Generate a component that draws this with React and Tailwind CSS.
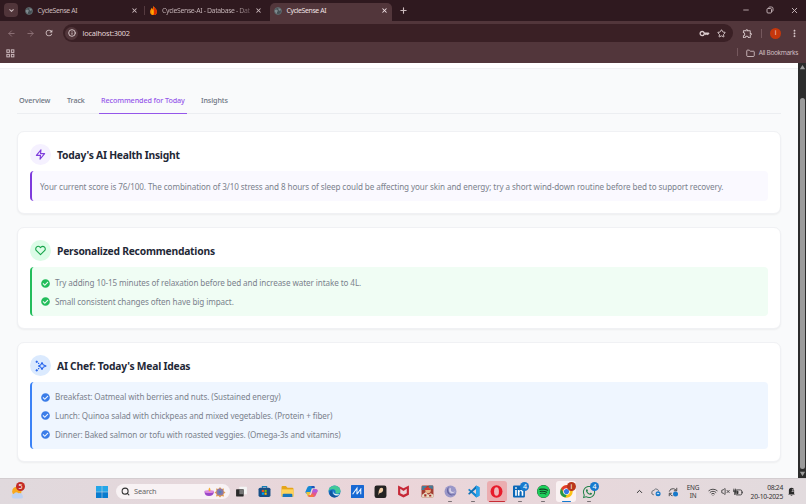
import { Search, ChevronDown, ChevronUp, ArrowLeft, ArrowRight, X, Plus, Minus, Info, Star, Folder, Wifi, VolumeX } from "lucide-react";
import { FaSpotify, FaWhatsapp, FaCheckCircle } from "react-icons/fa";
import { FiZap, FiHeart } from "react-icons/fi";
import { MdOutlineExtension, MdMoreVert, MdRefresh, MdOutlineKey } from "react-icons/md";

function Globe() {
  return (
    <svg viewBox="0 0 16 16" className="size-[8px] shrink-0">
      <circle cx="8" cy="8" r="7" fill="#444f54" stroke="#68757a" strokeWidth="1.4" />
      <path d="M2 6l4-1 2 3-2 2v4L2 10zM9 2l5 3-2 3-3-2z" fill="#7f8a8e" />
    </svg>
  );
}

function Flame() {
  return (
    <svg viewBox="0 0 16 16" className="size-[9px] shrink-0">
      <path d="M8 0c1 3 6 5 6 10a6 6 0 0 1-12 0C2 7 4 5 5 3l1 3z" fill="#ff9100" />
      <path d="M8 0c1 3 6 5 6 10a6 6 0 0 1-6 6z" fill="#dd2c00" />
      <path d="M8 6c-3 3-3 6 0 9z" fill="#ffc400" />
    </svg>
  );
}

function TabStrip() {
  return (
    <div className="flex h-[21px] bg-[#2f191f] text-[6.9px] tracking-[-0.36px] text-[#cbbabd]">
      <div className="ml-1 mt-[3px] flex size-[14px] items-center justify-center rounded-[4px] bg-[#51353a]">
        <ChevronDown className="size-[7px]" strokeWidth={3.5} />
      </div>
      <div className="ml-[7px] flex w-[119px] items-center">
        <Globe />
        <span className="ml-[4.5px] flex-1 whitespace-nowrap pt-px">CycleSense AI</span>
        <X className="mr-[6px] size-[7px]" strokeWidth={3.5} />
      </div>
      <div className="mt-[6px] h-[9px] w-px bg-[#553b40]" />
      <div className="ml-[4px] flex w-[115px] items-center">
        <Flame />
        <span className="ml-[4px] w-[90px] whitespace-nowrap bg-gradient-to-r from-[#cbbabd] from-82% to-[#59444a] bg-clip-text pt-px text-transparent">
          CycleSense-AI - Database - Dat
        </span>
        <X className="ml-[3px] size-[7px] shrink-0" strokeWidth={3.5} />
      </div>
      <div className="ml-[6px] mt-[3px] flex w-[122px] items-center rounded-t-[5px] bg-[#52363b] pb-[3px] text-[#efe2e4]">
        <div className="ml-[4px] flex">
          <Globe />
        </div>
        <span className="ml-[4.5px] flex-1 whitespace-nowrap pt-px">CycleSense AI</span>
        <X className="mr-[4px] size-[7px]" strokeWidth={3.5} />
      </div>
      <Plus className="ml-[7px] mt-[6px] size-[9px]" strokeWidth={3} />
      <div className="ml-auto flex items-start gap-[16px] pr-[7px] pt-[6px]">
        <Minus className="size-[8px]" strokeWidth={2.5} />
        <svg viewBox="0 0 16 16" className="size-[8px]" fill="none" stroke="currentColor" strokeWidth="1.8">
          <rect x="2" y="5" width="9" height="9" rx="2" />
          <path d="M5 3q1-1 3-1h3q3 0 3 3v3q0 2-1 3" />
        </svg>
        <X className="size-[9px]" strokeWidth={2.5} />
      </div>
    </div>
  );
}

function Toolbar() {
  return (
    <div className="flex h-[24px] items-center bg-[#52363b] text-[#d8c8ca]">
      <ArrowLeft className="ml-[7px] size-[9px] text-[#8d7176]" strokeWidth={2.5} />
      <ArrowRight className="ml-[10px] size-[9px] text-[#8d7176]" strokeWidth={2.5} />
      <MdRefresh className="ml-[9px] size-[10px]" />
      <div className="ml-[9px] flex h-[18px] w-[670px] items-center rounded-full bg-[#3a2025]">
        <div className="ml-[2px] flex size-[13px] items-center justify-center rounded-full bg-[#52363b]">
          <Info className="size-[8px]" strokeWidth={2.8} />
        </div>
        <span className="ml-[4.5px] flex-1 pt-px text-[7.4px] tracking-[-0.2px] text-[#e3d5d7]">localhost:3002</span>
        <MdOutlineKey className="mr-[7px] size-[11px]" />
        <Star className="mr-[7px] size-[9px]" strokeWidth={2.6} />
      </div>
      <MdOutlineExtension className="ml-[9px] size-[11px]" />
      <div className="ml-[8px] h-[9px] w-px bg-[#75585d]" />
      <div className="ml-[8px] flex size-[11px] items-center justify-center rounded-full bg-[#c5370c] text-[6.5px] text-[#ffd5c9]">i</div>
      <MdMoreVert className="ml-[8px] size-[11px]" />
    </div>
  );
}

function BookmarkBar() {
  return (
    <div className="flex h-[18px] items-center bg-[#52363b] text-[#cfbdc0]">
      <svg viewBox="0 0 16 16" className="mb-[2px] ml-[6px] size-[9px]" fill="none" stroke="currentColor" strokeWidth="1.7">
        <rect x="1.5" y="1.5" width="4.5" height="4.5" />
        <rect x="9.5" y="1.5" width="4.5" height="4.5" />
        <rect x="1.5" y="9.5" width="4.5" height="4.5" />
        <rect x="9.5" y="9.5" width="4.5" height="4.5" />
      </svg>
      <div className="mb-[4px] ml-auto h-[8px] w-px bg-[#75585d]" />
      <Folder className="mb-[2px] ml-[8px] size-[9px]" strokeWidth={2.4} />
      <span className="mb-[3px] ml-[4px] mr-[8px] whitespace-nowrap text-[6.5px] tracking-[-0.34px]">All Bookmarks</span>
    </div>
  );
}

function Card({ title, icon, iconClass, boxClass, className, children }) {
  return (
    <section className={`rounded-[7px] border border-[#f0f1f4] bg-white px-[12px] pt-[12px] shadow-[0_1px_2px_rgba(0,0,0,0.05)] ${className}`}>
      <div className="flex items-center">
        <div className={`flex size-[21px] items-center justify-center rounded-full ${iconClass}`}>{icon}</div>
        <h2 className="ml-[6px] whitespace-nowrap pt-px text-[10.3px] font-bold leading-[20px] tracking-[-0.23px] text-[#1f2937]">{title}</h2>
      </div>
      <div className={`mt-[6px] rounded-[4px] border-l-2 ${boxClass}`}>{children}</div>
    </section>
  );
}

function CheckList({ items, color, className }) {
  return (
    <ul className={`flex flex-col gap-[4.8px] pl-[9px] ${className}`}>
      {items.map((item) => (
        <li key={item} className="flex h-[14px] items-center">
          <FaCheckCircle className={`size-[9px] shrink-0 ${color}`} />
          <span className="ml-[5px] whitespace-nowrap">{item}</span>
        </li>
      ))}
    </ul>
  );
}

const recommendations = [
  "Try adding 10-15 minutes of relaxation before bed and increase water intake to 4L.",
  "Small consistent changes often have big impact.",
];

const meals = [
  "Breakfast: Oatmeal with berries and nuts. (Sustained energy)",
  "Lunch: Quinoa salad with chickpeas and mixed vegetables. (Protein + fiber)",
  "Dinner: Baked salmon or tofu with roasted veggies. (Omega-3s and vitamins)",
];

function Dashboard() {
  return (
    <main className="min-w-0 flex-1 bg-[#f9fafb]">
      <div className="h-[6px] border-b border-[#f0f1f3] bg-white" />
      <div className="px-[17px]">
        <nav className="mt-[22px] flex h-[23px] border-b border-[#eceef1] text-[7.2px] font-medium leading-[18px] tracking-[-0.1px] text-[#6b7280]">
          <span className="w-[50px] whitespace-nowrap pl-[2px]">Overview</span>
          <span className="w-[32px] whitespace-nowrap">Track</span>
          <span className="h-[23px] w-[88px] whitespace-nowrap border-b border-[#9557ea] pl-[2px] text-[#9557ea]">Recommended for Today</span>
          <span className="ml-[14px] whitespace-nowrap">Insights</span>
        </nav>
        <div className="mt-[17px] flex flex-col gap-[13px] text-[8.1px] tracking-[-0.086px] text-[#7b828d]">
          <Card
            title="Today's AI Health Insight"
            className="h-[83px]"
            iconClass="bg-[#f5f1ff] text-[#7e3bdc]"
            boxClass="h-[30px] border-[#7e3bdc] bg-[#faf9ff]"
            icon={<FiZap className="size-[11px]" strokeWidth={2.4} />}
          >
            <p className="whitespace-nowrap pl-[8px] leading-[31px]">
              Your current score is 76/100. The combination of 3/10 stress and 8 hours of sleep could be affecting your skin and energy; try a short wind-down routine before bed to support recovery.
            </p>
          </Card>
          <Card
            title="Personalized Recommendations"
            className="h-[102px]"
            iconClass="bg-[#dcfce7] text-[#16a34a]"
            boxClass="h-[49px] border-[#22bd5b] bg-[#f0fdf4]"
            icon={<FiHeart className="size-[11px]" strokeWidth={2.4} />}
          >
            <CheckList items={recommendations} color="text-[#22bd5b]" className="pt-[9px]" />
          </Card>
          <Card
            title="AI Chef: Today's Meal Ideas"
            className="h-[120px]"
            iconClass="bg-[#dbeafe] text-[#2563eb]"
            boxClass="h-[67px] border-[#3b82f6] bg-[#eff6ff]"
            icon={
              <svg viewBox="0 0 24 24" className="size-[12px]" fill="none" stroke="currentColor" strokeWidth="2.2" strokeLinejoin="round" strokeLinecap="round">
                <path d="M14 5l2.300 4.700L22 12l-5.700 2.300L14 19l-2.300-4.700L7 12l4.700-2.300z" />
                <path d="M3.500 2v3M2 3.500h3M3.500 19v3M2 20.500h3M7 6.500l.5.500M7 17.500l.5-.5" />
              </svg>
            }
          >
            <CheckList items={meals} color="text-[#3b7de8]" className="pt-[8px]" />
          </Card>
        </div>
      </div>
    </main>
  );
}

function Scrollbar() {
  return (
    <div className="flex w-[8px] flex-col items-center bg-[#2c2c2c]">
      <svg viewBox="0 0 8 8" className="mt-[1px] size-[7px]"><path d="M4 1l3 5H1z" fill="#9b9b9b" /></svg>
      <div className="mt-[27px] h-[371px] w-[5px] rounded-full bg-[#9b9b9b]" />
      <svg viewBox="0 0 8 8" className="mt-[1px] size-[7px]"><path d="M4 7L1 2h6z" fill="#9b9b9b" /></svg>
    </div>
  );
}

function Badge({ children, className }) {
  return (
    <span className={`absolute flex size-[9px] items-center justify-center rounded-full text-[7px] leading-none text-white ${className}`}>{children}</span>
  );
}

const apps = [
  {
    name: "taskview",
    icon: <><rect x="8" y="3" width="14" height="14" rx="1" fill="#f4f4f4" /><rect x="2" y="8" width="14" height="13" rx="1" fill="#292929" /><path d="M8 8h8v9H8z" fill="#777" /></>,
  },
  {
    name: "store",
    icon: <><path d="M8 6V3h8v3" fill="none" stroke="#1680b8" strokeWidth="2" /><rect x="1" y="5" width="22" height="17" rx="3" fill="#174f86" /><path d="M7 9h4v4H7z" fill="#f25022" /><path d="M12 9h4v4h-4z" fill="#7fba00" /><path d="M7 14h4v4H7z" fill="#00a4ef" /><path d="M12 14h4v4h-4z" fill="#ffb900" /></>,
  },
  {
    name: "files",
    icon: <><path d="M1 4q0-2 2-2h6l3 3h9q2 0 2 2v14H1z" fill="#e5a51b" /><path d="M1 8h22v13H1z" fill="#ffd35a" /><path d="M5 16h14q2 0 2 2v4H3v-4q0-2 2-2z" fill="#1976bd" /></>,
  },
  {
    name: "copilot",
    icon: <><path d="M8 2h8q2 0 2 3l-5 0-4 11H4q-4 0-3-4l3-7q1-3 4-3z" fill="#1688d4" /><path d="M2 13h8l-2 6q-1 3-3 2z" fill="#e8c43a" /><path d="M16 22H8q-2 0-2-3h5l4-11h5q4 0 3 4l-3 7q-1 3-4 3z" fill="#e2568f" /><path d="M15 8h5q4 0 3 4l-1 2h-9z" fill="#b05be0" /><path d="M6 19h5l1-3 5 3-2 3H8q-2 0-2-3z" fill="#f8783f" /><path d="M12 2h4q2 0 2 4h-6z" fill="#2152b8" /></>,
  },
  {
    name: "edge",
    icon: <><circle cx="12" cy="12" r="11" fill="#1576c8" /><path d="M1 11C2-2 23-2 23 11q0 5-6 5-4 0-3-3 0-6-6-5-5 0-7 3z" fill="#42c998" /><path d="M8 9q-4 9 8 11h4Q10 27 4 19 0 12 8 9z" fill="#12549b" /><path d="M10 11q-1 6 9 6 2 0 3-1-3 5-9 3-5-3-3-8z" fill="#e4eff2" /></>,
  },
  {
    name: "myasus",
    icon: <><rect width="24" height="24" rx="1" fill="#1768d3" /><path d="M3 17l8-11v11M11 17l8-11M18 8v9" fill="none" stroke="#eef6ff" strokeWidth="2" /></>,
  },
  {
    name: "feather",
    icon: <><rect x="1" y="1" width="22" height="23" rx="4" fill="#242322" /><path d="M8 19q0-9 3-13 6-3 6 3-1 5-7 6z" fill="#f2cfa8" /></>,
  },
  {
    name: "shield",
    icon: <path d="M2 1l10 5 10-5v17l-10 5-10-5zM6 7v8l6 3 6-3V7l-6 4z" fill="#c62837" fillRule="evenodd" />,
  },
  {
    name: "game",
    icon: <><rect x="1" y="1" width="22" height="22" rx="2" fill="#a33d32" /><path d="M2 2h9l-4 7H1zM14 1h8v7l-7-2z" fill="#467c98" /><circle cx="13" cy="10" r="5" fill="#eab58a" /><path d="M5 7l6-3 8 3-2 2H8z" fill="#d43932" /><path d="M2 18l7-5 4 5 5-3 5 3v5H2z" fill="#e6ddc4" /><path d="M6 17h4v4H6zM15 18h4v3h-4z" fill="#a82a26" /></>,
  },
  {
    name: "moon",
    running: true,
    icon: <><circle cx="12" cy="12" r="11" fill="#9a97c8" /><path d="M9 3a9 9 0 1 0 13 12q-7 5-12 0-4-6-1-12z" fill="#66659f" /><path d="M10 6q-2 8 4 9 4 0 7-3-6 2-8-1-1-2 0-5z" fill="#d8d3e8" /></>,
  },
  {
    name: "code",
    running: true,
    icon: <><path d="M17 1l6 3v16l-6 3L2 9l2-2 13 10z" fill="#1486cf" /><path d="M17 1v6L4 18l-2-2z" fill="#0e70b5" /><path d="M17 1l6 3v16l-6 3z" fill="#2aa4ed" /></>,
  },
  {
    name: "opera",
    running: true,
    tile: "bg-[#ebadb0]",
    bar: "w-[16px] bg-[#c82c34]",
    icon: <><ellipse cx="12" cy="12" rx="11" ry="11.5" fill="#e71c2b" /><ellipse cx="12" cy="12" rx="4.5" ry="8" fill="#efb7ba" /></>,
  },
  {
    name: "linkedin",
    running: true,
    badge: "4",
    icon: <><rect y="1" width="22" height="22" rx="2" fill="#0a66b7" /><path d="M4 9h3v11H4zM4 4h3v3H4zM9 9h3v2q3-4 7 0v9h-3v-7q-2-4-4 0v7H9z" fill="#fff" /></>,
  },
  { name: "spotify", running: true },
  {
    name: "chrome",
    running: true,
    badge: "i",
    tile: "bg-[#faf2f3]",
    bar: "w-[9px] bg-[#1479ce]",
    icon: <><circle cx="12" cy="12" r="11.5" fill="#fbc116" /><path d="M2 6q10-12 20 0l-10 1-5 7z" fill="#e33b2e" /><path d="M2 6l5 9 6 2-3 6Q-4 20 2 6z" fill="#269747" /><circle cx="12" cy="12" r="6" fill="#fff" /><circle cx="12" cy="12" r="4.7" fill="#3478e5" /></>,
  },
  { name: "whatsapp", running: true, badge: "4" },
];

function AppIcon({ app }) {
  if (app.name === "spotify") return <FaSpotify className="size-[13px] rounded-full bg-[#123a20] text-[#1ecf5c]" />;
  if (app.name === "whatsapp") return <FaWhatsapp className="size-[14px] text-[#24834b]" />;
  return <svg viewBox="0 0 24 24" className="size-[13px]">{app.icon}</svg>;
}

function Taskbar() {
  return (
    <footer className="flex h-[26px] items-center border-t border-[#d3cdd0] bg-gradient-to-r from-[#e0d9dd] via-[#ebd5d9] via-50% to-[#e2dbde] text-[#333]">
      <div className="relative ml-[11px] size-[14px]">
        <svg viewBox="0 0 24 24" className="size-[14px]">
          <circle cx="10" cy="11" r="8" fill="#f7a91f" />
          <path d="M5 23a4 4 0 0 1 0-8q3-5 8-1 6-1 7 4 2 5-3 5z" fill="#bed2f2" />
        </svg>
        <Badge className="-top-[3px] left-[5px] bg-[#c42b25]">5</Badge>
      </div>
      <svg viewBox="0 0 24 24" className="ml-[71px] size-[12px]">
        <path d="M0 0h11.5v11.5H0zM12.5 0H24v11.5H12.5z" fill="#24a6e8" />
        <path d="M0 12.5h11.5V24H0zM12.5 12.5H24V24H12.5z" fill="#087ccf" />
      </svg>
      <div className="ml-[8px] flex h-[15px] w-[114px] items-center rounded-full bg-[#f8f2f4]">
        <Search className="ml-[5px] size-[9px]" strokeWidth={2.8} />
        <span className="ml-[4px] flex-1 text-[7.4px] tracking-[-0.15px] text-[#666]">Search</span>
        <svg viewBox="0 0 44 24" className="mr-[4px] h-[12px] w-[22px]">
          <path d="M1 11h19q-1 9-10 9T1 11z" fill="#9b48c9" />
          <ellipse cx="10.5" cy="11" rx="9.5" ry="3" fill="#db8add" />
          <path d="M11 3q4 5 0 8-4-3 0-8z" fill="#f5ac31" />
          <path d="M32 2l3 4 5-1-1 5 4 3-4 3 1 5-5-1-3 3-3-3-5 1 1-5-4-3 4-3-1-5 5 1z" fill="#e19b50" />
          <circle cx="32" cy="12" r="7" fill="#8878aa" />
          <circle cx="32" cy="12" r="3" fill="#4f83bc" />
        </svg>
      </div>
      <div className="flex">
        {apps.map((app) => (
          <div key={app.name} className="relative flex h-[25px] w-[23.2px] items-center justify-center">
            <div className={`flex h-[21px] w-[20px] items-center justify-center rounded-[3px] ${app.tile || ""}`}>
              <AppIcon app={app} />
            </div>
            {app.badge && <Badge className={app.badge === "i" ? "right-[2px] top-[3px] bg-[#b9361b]" : "right-[2px] top-[3px] bg-[#1779ce]"}>{app.badge}</Badge>}
            {app.running && (
              <div className="absolute inset-x-0 bottom-[2px] flex justify-center">
                <div className={`h-[1.5px] rounded-full ${app.bar || "w-[4px] bg-[#777073]"}`} />
              </div>
            )}
          </div>
        ))}
      </div>
      <ChevronUp className="ml-[34px] size-[9px]" strokeWidth={2.6} />
      <svg viewBox="0 0 24 24" className="ml-[7px] size-[10px]" fill="none" stroke="#59616b" strokeWidth="2">
        <path d="M7 19q-7-1-5-7 1-4 5-4 4-6 9-2 2 1 2 4" />
        <circle cx="17" cy="16" r="6" fill="#1679cb" stroke="none" />
        <path d="M14 16h5l-2-2" stroke="#fff" />
      </svg>
      <svg viewBox="0 0 24 24" className="ml-[7px] size-[10px]" fill="none" stroke="#444" strokeWidth="2.2">
        <path d="M3 11q2-8 10-7 4 1 7 4M21 2v7h-7M3 22v-7h6M4 16q3 5 7 5" />
        <circle cx="18" cy="17" r="6" fill="#1679cb" stroke="none" />
      </svg>
      <div className="ml-[8px] w-[14px] pt-px text-center text-[6.4px] leading-[8.5px] tracking-[-0.2px]">
        <div>ENG</div>
        <div>IN</div>
      </div>
      <Wifi className="ml-[8px] size-[10px]" />
      <VolumeX className="ml-[3px] size-[9px]" strokeWidth={2.2} />
      <svg viewBox="0 0 24 24" className="ml-[3px] size-[10px]" fill="none" stroke="#333" strokeWidth="2">
        <rect x="6" y="7" width="15" height="12" rx="3" />
        <path d="M22.500 11v4" />
        <path d="M9 10h3v6H9z" fill="#333" />
        <path d="M2 4v3M6 4v3M1 8h6v3H1zM4 11v8" />
      </svg>
      <div className="ml-auto whitespace-nowrap text-right text-[6.7px] leading-[9px] tracking-[-0.25px]">
        <div>08:24</div>
        <div>20-10-2025</div>
      </div>
      <svg viewBox="0 0 24 24" className="ml-[4px] mr-[10px] size-[9px]" fill="#292929">
        <path d="M5 18V9q0-7 7-7t7 7v9l2 2H3zM9 21h6q-3 4-6 0z" />
        <path d="M13 7h5l-5 5h5" fill="none" stroke="#e5dce0" strokeWidth="1.6" />
      </svg>
    </footer>
  );
}

export default function App() {
  return (
    <div className="flex h-[504px] w-[806px] flex-col overflow-hidden font-['Noto_Sans','Open_Sans',sans-serif]">
      <TabStrip />
      <Toolbar />
      <BookmarkBar />
      <div className="flex h-[415px]">
        <Dashboard />
        <Scrollbar />
      </div>
      <Taskbar />
    </div>
  );
}
